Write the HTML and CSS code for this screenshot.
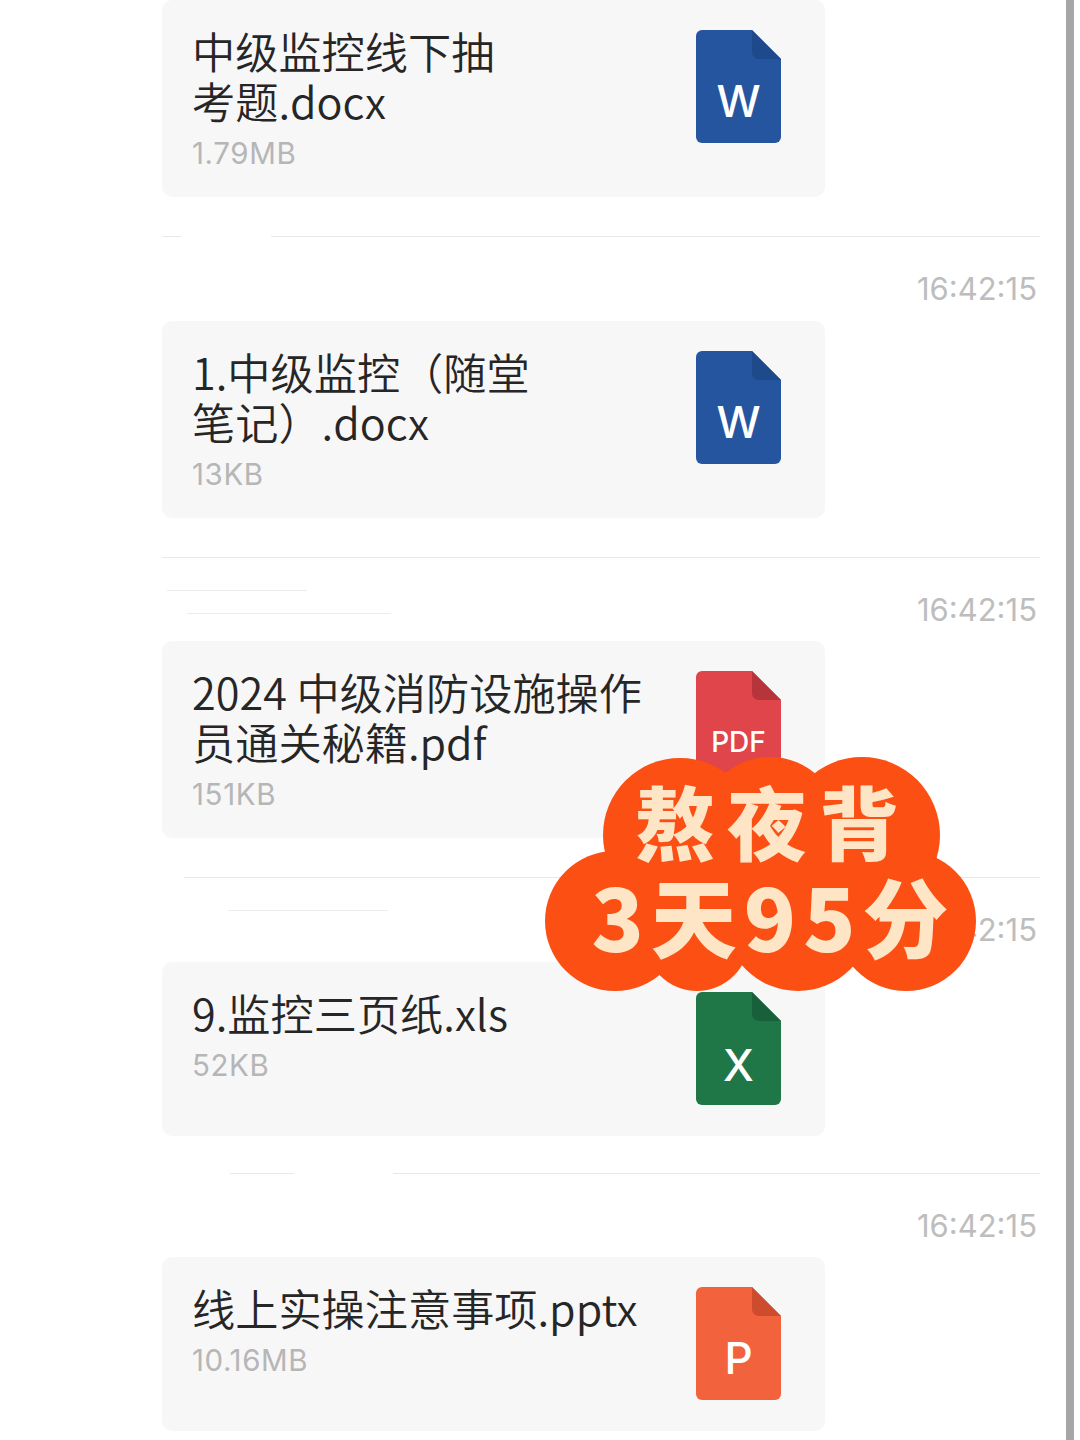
FILE: index.html
```html
<!DOCTYPE html>
<html lang="zh-CN">
<head>
    <meta charset="UTF-8">
    <meta name="viewport" content="width=device-width, initial-scale=1.0">
    <title>文件列表</title>
    <link rel="stylesheet" href="styles.css">
</head>
<body>
    <div class="page">
        <div class="feed">
            <div class="file-card tall">
                <div class="file-text">
                    <div class="file-name">中级监控线下抽<br>考题.docx</div>
                    <div class="file-size">1.79MB</div>
                </div>
                <svg class="file-icon" viewBox="0 0 85 113">
                    <path class="word" d="M6 0H56L85 29V107A6 6 0 0 1 79 113H6A6 6 0 0 1 0 107V6A6 6 0 0 1 6 0Z"/>
                    <path class="word-fold" d="M56 0L85 29H63A7 7 0 0 1 56 22Z"/>
                    <text x="42.5" y="87" class="icon-letter">W</text>
                </svg>
            </div>
            <div class="divider"><i class="erase erase-one"></i></div>
            <div class="meta">
                <div class="marks"></div>
                <div class="time">16:42:15</div>
            </div>

            <div class="file-card tall">
                <div class="file-text">
                    <div class="file-name">1.中级监控（随堂<br>笔记）.docx</div>
                    <div class="file-size">13KB</div>
                </div>
                <svg class="file-icon" viewBox="0 0 85 113">
                    <path class="word" d="M6 0H56L85 29V107A6 6 0 0 1 79 113H6A6 6 0 0 1 0 107V6A6 6 0 0 1 6 0Z"/>
                    <path class="word-fold" d="M56 0L85 29H63A7 7 0 0 1 56 22Z"/>
                    <text x="42.5" y="87" class="icon-letter">W</text>
                </svg>
            </div>
            <div class="divider"></div>
            <div class="meta">
                <div class="marks">
                    <i class="mark mark-a"></i>
                    <i class="mark mark-b"></i>
                </div>
                <div class="time">16:42:15</div>
            </div>

            <div class="file-card tall">
                <div class="file-text">
                    <div class="file-name">2024 中级消防设施操作<br>员通关秘籍.pdf</div>
                    <div class="file-size">151KB</div>
                </div>
                <svg class="file-icon" viewBox="0 0 85 113">
                    <path class="pdf" d="M6 0H56L85 29V107A6 6 0 0 1 79 113H6A6 6 0 0 1 0 107V6A6 6 0 0 1 6 0Z"/>
                    <path class="pdf-fold" d="M56 0L85 29H63A7 7 0 0 1 56 22Z"/>
                    <text x="42.5" y="81" class="icon-label">PDF</text>
                </svg>
            </div>
            <div class="divider"><i class="erase erase-two"></i></div>
            <div class="meta">
                <div class="marks">
                    <i class="mark mark-c"></i>
                </div>
                <div class="time">16:42:15</div>
            </div>

            <div class="file-card short">
                <div class="file-text">
                    <div class="file-name">9.监控三页纸.xls</div>
                    <div class="file-size">52KB</div>
                </div>
                <svg class="file-icon" viewBox="0 0 85 113">
                    <path class="excel" d="M6 0H56L85 29V107A6 6 0 0 1 79 113H6A6 6 0 0 1 0 107V6A6 6 0 0 1 6 0Z"/>
                    <path class="excel-fold" d="M56 0L85 29H63A7 7 0 0 1 56 22Z"/>
                    <text x="42.5" y="89" class="icon-letter">X</text>
                </svg>
            </div>
            <div class="divider last"><i class="erase erase-three"></i><i class="erase erase-four"></i></div>
            <div class="meta">
                <div class="marks"></div>
                <div class="time">16:42:15</div>
            </div>

            <div class="file-card short">
                <div class="file-text">
                    <div class="file-name">线上实操注意事项.pptx</div>
                    <div class="file-size">10.16MB</div>
                </div>
                <svg class="file-icon" viewBox="0 0 85 113">
                    <path class="ppt" d="M6 0H56L85 29V107A6 6 0 0 1 79 113H6A6 6 0 0 1 0 107V6A6 6 0 0 1 6 0Z"/>
                    <path class="ppt-fold" d="M56 0L85 29H63A7 7 0 0 1 56 22Z"/>
                    <text x="42.5" y="87" class="icon-letter">P</text>
                </svg>
            </div>
        </div>
        <div class="edge"></div>
    </div>

    <div class="badge">
        <svg class="cloud" viewBox="0 0 431 236">
            <circle cx="135" cy="80" r="77"/>
            <circle cx="225" cy="72" r="70"/>
            <circle cx="317" cy="80" r="78"/>
            <circle cx="70" cy="166" r="70"/>
            <circle cx="152" cy="184" r="52"/>
            <circle cx="253" cy="162" r="74"/>
            <circle cx="361" cy="166" r="70"/>
            <rect x="70" y="90" width="290" height="100"/>
        </svg>
        <div class="badge-text">
            <div class="badge-top">熬夜背</div>
            <div class="badge-bottom">3天95分</div>
        </div>
    </div>
</body>
</html>
```

FILE: styles.css
```css
* {
    box-sizing: border-box;
}
html, body {
    margin: 0;
    height: 1440px;
    overflow: hidden;
    background: #fff;
}
body {
    position: relative;
    font-family: "Inter", "Noto Sans CJK SC", sans-serif;
}
.page {
    display: flex;
    width: 1074px;
    height: 1440px;
}
.feed {
    flex: 1;
    padding-left: 162px;
    padding-right: 26px;
}
.edge {
    width: 8px;
    background: #a6a6a6;
}

/* file cards */
.file-card {
    display: flex;
    justify-content: space-between;
    width: 663px;
    padding: 30px 44px 0 30px;
    background: #f7f7f8;
    border-radius: 10px;
}
.file-card.tall {
    height: 197px;
}
.file-card.short {
    height: 174px;
}
.file-text {
    margin-top: -5px;
}
.file-name {
    font-size: 43.2px;
    line-height: 50px;
    color: #262626;
    font-family: "Noto Sans CJK SC", sans-serif;
    font-weight: 350;
}
.file-size {
    margin-top: 10px;
    font-size: 29.5px;
    line-height: 36px;
    color: #b6b6b6;
    letter-spacing: 0.6px;
}
.file-icon {
    flex: none;
    width: 85px;
    height: 113px;
}
.word { fill: #26559f; }
.word-fold { fill: #1e4a8b; }
.pdf { fill: #df454b; }
.pdf-fold { fill: #b5353a; }
.excel { fill: #1f7647; }
.excel-fold { fill: #176039; }
.ppt { fill: #f2623c; }
.ppt-fold { fill: #cc4c2d; }
.icon-letter {
    font-family: "Inter", sans-serif;
    font-size: 44px;
    font-weight: 500;
    fill: #fff;
    text-anchor: middle;
}
.icon-label {
    font-family: "Inter", sans-serif;
    font-size: 28px;
    font-weight: 500;
    fill: #fff;
    text-anchor: middle;
}

/* separators and timestamps */
.divider {
    display: flex;
    height: 1px;
    margin-top: 39px;
    background: #e8e8e8;
}
.divider.last {
    margin-top: 37px;
}
.erase {
    height: 1px;
    background: #fff;
}
.erase-one {
    width: 90px;
    margin-left: 19px;
}
.erase-two {
    width: 22px;
}
.erase-three {
    width: 68px;
}
.erase-four {
    width: 99px;
    margin-left: 64px;
}
.meta {
    display: flex;
    justify-content: space-between;
    height: 83.5px;
    padding-right: 3px;
}
.mark {
    display: block;
    height: 1px;
    background: #ececec;
}
.mark-a {
    width: 140px;
    margin: 32px 0 0 5px;
}
.mark-b {
    width: 204px;
    margin: 22px 0 0 25px;
}
.mark-c {
    width: 160px;
    margin: 32px 0 0 66px;
}
.time {
    padding-top: 33px;
    font-size: 31px;
    line-height: 38px;
    color: #bdbdbd;
}

/* sticker over the list */
.badge {
    position: absolute;
    left: 545px;
    top: 755px;
    width: 431px;
    height: 236px;
}
.cloud {
    display: block;
    width: 431px;
    height: 236px;
    fill: #fb4f14;
}
.badge-text {
    position: absolute;
    inset: 0;
    text-align: center;
    font-family: "Noto Sans CJK SC", sans-serif;
    font-weight: 900;
    color: #fde5c5;
}
.badge-top {
    margin-top: 16px;
    padding-left: 25px;
    font-size: 80px;
    line-height: 96px;
    letter-spacing: 12px;
}
.badge-bottom {
    padding-left: 26px;
    font-size: 86px;
    line-height: 96px;
    letter-spacing: 7px;
}
```
